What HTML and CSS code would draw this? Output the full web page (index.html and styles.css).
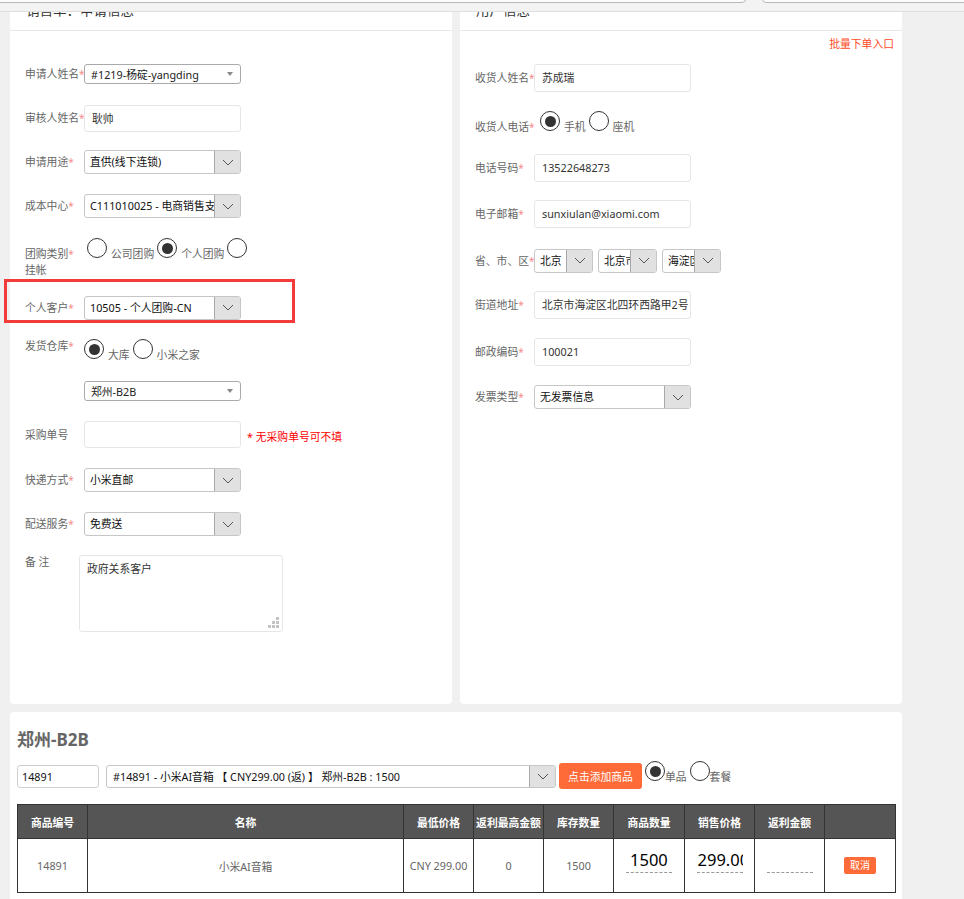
FILE: index.html
```html
<!DOCTYPE html>
<html lang="zh-CN">
<head>
<meta charset="utf-8">
<title>销售单</title>
<link rel="stylesheet" href="styles.css">
</head>
<body>
<div class="topbar">
  <div class="tb-box tb-a"></div>
  <div class="tb-box tb-b"></div>
</div>
<main class="page">
  <div class="cols">
    <section class="card">
      <header class="card-hd">销售单：申请信息</header>
      <div class="card-bd left-bd">
        <div class="row h44">
          <span class="lbl">申请人姓名<i>*</i></span>
          <div class="bsel"><span>#1219-杨碇-yangding</span><b class="caret"></b></div>
        </div>
        <div class="row h44">
          <span class="lbl">审核人姓名<i>*</i></span>
          <div class="inp">耿帅</div>
        </div>
        <div class="row h44">
          <span class="lbl">申请用途<i>*</i></span>
          <div class="sel"><span class="sel-txt">直供(线下连锁)</span><span class="sel-btn"><svg width="12" height="7" viewBox="0 0 12 7"><path d="M1 1l5 5 5-5" fill="none" stroke="#555" stroke-width="1"/></svg></span></div>
        </div>
        <div class="row h44">
          <span class="lbl">成本中心<i>*</i></span>
          <div class="sel"><span class="sel-txt">C111010025 - 电商销售支持部</span><span class="sel-btn"><svg width="12" height="7" viewBox="0 0 12 7"><path d="M1 1l5 5 5-5" fill="none" stroke="#555" stroke-width="1"/></svg></span></div>
        </div>
        <div class="row h51 top">
          <span class="lbl lbl-2">团购类别<i>*</i><br>挂帐</span>
          <div class="radios r-g1">
            <span class="radio"></span><span class="rtxt">公司团购</span>
            <span class="radio on"></span><span class="rtxt">个人团购</span>
            <span class="radio"></span>
          </div>
        </div>
        <div class="hl">
          <span class="lbl">个人客户<i>*</i></span>
          <div class="sel"><span class="sel-txt">10505 - 个人团购-CN</span><span class="sel-btn"><svg width="12" height="7" viewBox="0 0 12 7"><path d="M1 1l5 5 5-5" fill="none" stroke="#555" stroke-width="1"/></svg></span></div>
        </div>
        <div class="row h48 top r-pad16">
          <span class="lbl">发货仓库<i>*</i></span>
          <div class="radios">
            <span class="radio on"></span><span class="rtxt">大库</span>
            <span class="radio"></span><span class="rtxt">小米之家</span>
          </div>
        </div>
        <div class="row h40">
          <span class="lbl"></span>
          <div class="bsel"><span>郑州-B2B</span><b class="caret"></b></div>
        </div>
        <div class="row h47">
          <span class="lbl">采购单号</span>
          <div class="inp"></div>
          <span class="note">* 无采购单号可不填</span>
        </div>
        <div class="row h44">
          <span class="lbl">快递方式<i>*</i></span>
          <div class="sel"><span class="sel-txt">小米直邮</span><span class="sel-btn"><svg width="12" height="7" viewBox="0 0 12 7"><path d="M1 1l5 5 5-5" fill="none" stroke="#555" stroke-width="1"/></svg></span></div>
        </div>
        <div class="row h44">
          <span class="lbl">配送服务<i>*</i></span>
          <div class="sel"><span class="sel-txt">免费送</span><span class="sel-btn"><svg width="12" height="7" viewBox="0 0 12 7"><path d="M1 1l5 5 5-5" fill="none" stroke="#555" stroke-width="1"/></svg></span></div>
        </div>
        <div class="row top r-pad9">
          <span class="lbl lbl-note">备 注</span>
          <div class="txa">政府关系客户
            <svg class="grip" width="11" height="11" viewBox="0 0 11 11"><rect x="8" y="0" width="3" height="3"/><rect x="4" y="4" width="3" height="3"/><rect x="8" y="4" width="3" height="3"/><rect x="0" y="8" width="3" height="3"/><rect x="4" y="8" width="3" height="3"/><rect x="8" y="8" width="3" height="3"/></svg>
          </div>
        </div>
      </div>
    </section>

    <section class="card">
      <header class="card-hd">用户信息</header>
      <div class="card-bd right-bd">
        <div class="bulk">批量下单入口</div>
        <div class="row h46">
          <span class="lbl">收货人姓名<i>*</i></span>
          <div class="inp tall">苏成瑞</div>
        </div>
        <div class="row h44 top r-pad10">
          <span class="lbl lbl-r">收货人电话<i>*</i></span>
          <div class="radios r-g2">
            <span class="radio on"></span><span class="rtxt">手机</span>
            <span class="radio"></span><span class="rtxt">座机</span>
          </div>
        </div>
        <div class="row h46">
          <span class="lbl">电话号码<i>*</i></span>
          <div class="inp tall">13522648273</div>
        </div>
        <div class="row h46">
          <span class="lbl">电子邮箱<i>*</i></span>
          <div class="inp tall">sunxiulan@xiaomi.com</div>
        </div>
        <div class="row h47">
          <span class="lbl">省、市、区<i>*</i></span>
          <div class="addr">
            <div class="sel sm"><span class="sel-txt">北京</span><span class="sel-btn"><svg width="12" height="7" viewBox="0 0 12 7"><path d="M1 1l5 5 5-5" fill="none" stroke="#555" stroke-width="1"/></svg></span></div>
            <div class="sel sm"><span class="sel-txt">北京市</span><span class="sel-btn"><svg width="12" height="7" viewBox="0 0 12 7"><path d="M1 1l5 5 5-5" fill="none" stroke="#555" stroke-width="1"/></svg></span></div>
            <div class="sel sm"><span class="sel-txt">海淀区</span><span class="sel-btn"><svg width="12" height="7" viewBox="0 0 12 7"><path d="M1 1l5 5 5-5" fill="none" stroke="#555" stroke-width="1"/></svg></span></div>
          </div>
        </div>
        <div class="row h42">
          <span class="lbl">街道地址<i>*</i></span>
          <div class="inp tall">北京市海淀区北四环西路甲2号</div>
        </div>
        <div class="row h52">
          <span class="lbl">邮政编码<i>*</i></span>
          <div class="inp tall">100021</div>
        </div>
        <div class="row h38">
          <span class="lbl">发票类型<i>*</i></span>
          <div class="sel"><span class="sel-txt">无发票信息</span><span class="sel-btn"><svg width="12" height="7" viewBox="0 0 12 7"><path d="M1 1l5 5 5-5" fill="none" stroke="#555" stroke-width="1"/></svg></span></div>
        </div>
      </div>
    </section>
  </div>

  <section class="bcard">
    <h2 class="wh">郑州-B2B</h2>
    <div class="pbar">
      <div class="pinp">14891</div>
      <div class="sel wide"><span class="sel-txt">#14891 - 小米AI音箱 【 CNY299.00 (返) 】 郑州-B2B : 1500</span><span class="sel-btn"><svg width="12" height="7" viewBox="0 0 12 7"><path d="M1 1l5 5 5-5" fill="none" stroke="#555" stroke-width="1"/></svg></span></div>
      <button class="addbtn">点击添加商品</button>
      <div class="radios r-g3">
        <span class="radio on"></span><span class="rtxt">单品</span>
        <span class="radio"></span><span class="rtxt">套餐</span>
      </div>
    </div>
    <table class="tbl">
      <colgroup>
        <col class="w70"><col class="w316"><col class="w70"><col class="w70"><col class="w70"><col class="w71"><col class="w70"><col class="w70"><col class="w71">
      </colgroup>
      <thead>
        <tr><th>商品编号</th><th>名称</th><th>最低价格</th><th>返利最高金额</th><th>库存数量</th><th>商品数量</th><th>销售价格</th><th>返利金额</th><th></th></tr>
      </thead>
      <tbody>
        <tr>
          <td>14891</td>
          <td>小米AI音箱</td>
          <td>CNY 299.00</td>
          <td>0</td>
          <td>1500</td>
          <td class="incell"><div class="cin qty">1500</div></td>
          <td class="incell"><div class="cin price">299.00</div></td>
          <td class="incell"><div class="cin"></div></td>
          <td><span class="cancel">取消</span></td>
        </tr>
      </tbody>
    </table>
  </section>
</main>
</body>
</html>
```

FILE: styles.css
```css
* { box-sizing: border-box; margin: 0; padding: 0; }
html, body { background: #f0f0f0; }
body {
  font-family: "Noto Sans", "Noto Sans CJK SC", sans-serif;
  font-size: 10.8px;
  color: #333;
  overflow: hidden;
}

/* top overlay bar (page is scrolled under it) */
.topbar {
  position: fixed;
  top: 0; left: 0; right: 0;
  height: 12px;
  background: #f3f3f3;
  border-bottom: 1px solid #dedede;
  z-index: 10;
}
.tb-box {
  position: absolute;
  top: -3px;
  height: 6px;
  background: #fbfbfb;
  border: 1px solid #b9b9b9;
  border-radius: 0 0 4px 4px;
}
.tb-a { left: -6px; width: 752px; }
.tb-b { left: 762px; right: -10px; }

.page { margin-top: -10px; padding: 0 62px 0 10px; }
.cols { display: grid; grid-template-columns: 442px 442px; gap: 8px; }
.card { background: #fff; border-radius: 4px; min-height: 714px; }
.card-hd {
  height: 41px;
  border-bottom: 1px solid #e8e8e8;
  padding: 0 16px;
  font-size: 13.5px;
  line-height: 40px;
  color: #333;
}
.left-bd { padding: 21px 0 0 15px; }
.right-bd { padding: 0 8px 0 15px; }

.row { display: flex; align-items: center; }
.row.top { align-items: flex-start; }
.h38 { height: 38px; } .h40 { height: 40px; } .h42 { height: 42px; }
.h44 { height: 44px; } .h46 { height: 46px; } .h47 { height: 47px; }
.h48 { height: 48px; } .h51 { height: 51px; } .h52 { height: 52px; }
.r-pad16 { padding-top: 16px; }
.r-pad10 { padding-top: 10px; }
.r-pad9 { padding-top: 9px; }

.lbl {
  width: 59px;
  flex: none;
  color: #666;
  line-height: 14px;
  white-space: nowrap;
}
.lbl i { font-style: normal; color: #f78a8a; font-size: 10px; }
.lbl-2 { margin-top: 18px; line-height: 15px; }
.lbl-r { margin-top: 9px; }
.lbl-note { width: 54px; }

.inp {
  width: 157px;
  height: 27px;
  border: 1px solid #e6e6e6;
  border-radius: 3px;
  padding-left: 7px;
  line-height: 25px;
  color: #333;
  white-space: nowrap;
  overflow: hidden;
}
.inp.tall { height: 28px; line-height: 26px; }

.sel {
  width: 157px;
  height: 24px;
  border: 1px solid #c6c6c6;
  border-radius: 3px;
  display: flex;
  overflow: hidden;
  background: #fff;
}
.sel-txt {
  flex: 1;
  min-width: 0;
  padding-left: 5px;
  line-height: 22px;
  color: #111;
  overflow: hidden;
  white-space: nowrap;
}
.sel-btn {
  width: 26px;
  flex: none;
  background: #e1e1e1;
  border-left: 1px solid #a9a9a9;
  display: flex;
  align-items: center;
  justify-content: center;
}
.sel.sm { width: 59px; }
.addr { display: flex; gap: 5px; }

.bsel {
  width: 157px;
  height: 20px;
  border: 1px solid #aaa;
  border-radius: 3px;
  display: flex;
  align-items: center;
  justify-content: space-between;
  padding: 0 7px 0 6px;
  color: #222;
  white-space: nowrap;
}
.caret {
  width: 0; height: 0;
  border-top: 4px solid #888;
  border-left: 3px solid transparent;
  border-right: 3px solid transparent;
}

.radios { display: flex; align-items: flex-start; }
.r-g1 { margin-top: 10px; margin-left: 3px; }
.r-g2 { margin-left: 6px; }
.radio {
  width: 20px; height: 20px;
  border: 1.4px solid #333;
  border-radius: 50%;
  flex: none;
  display: flex;
  align-items: center;
  justify-content: center;
  background: #fff;
}
.radio.on::after {
  content: "";
  width: 11px; height: 11px;
  border-radius: 50%;
  background: #333;
}
.rtxt { margin: 9px 3px 0 4px; line-height: 14px; color: #666; white-space: nowrap; }

.hl {
  margin-left: -21px;
  width: 291px;
  height: 44px;
  border: 3px solid #f23b3b;
  display: flex;
  align-items: center;
  padding: 13px 0 0 18px;
}

.note { margin-left: 6px; color: #f00; margin-top: 3px; }

.txa {
  position: relative;
  width: 204px;
  height: 77px;
  border: 1px solid #e6e6e6;
  border-radius: 3px;
  padding: 6px 7px;
  line-height: 14px;
  color: #333;
}
.grip { position: absolute; right: 3px; bottom: 3px; fill: #c4c4c4; }

.bulk {
  height: 24px;
  padding-top: 5px;
  line-height: 16px;
  text-align: right;
  color: #ff4b1f;
}

/* bottom card */
.bcard {
  margin-top: 8px;
  background: #fff;
  border-radius: 4px;
  padding: 18px 7px 30px;
}
.wh { font-size: 17px; font-weight: bold; color: #666; line-height: 20px; }
.pbar { display: flex; align-items: center; height: 26px; margin-top: 13px; }
.pinp {
  width: 82px; height: 23px;
  border: 1px solid #cfcfcf;
  border-radius: 3px;
  padding-left: 4px;
  line-height: 21px;
  color: #111;
}
.sel.wide { width: 450px; height: 23px; margin-left: 7px; }
.sel.wide .sel-txt { padding-left: 6px; line-height: 21px; }
.addbtn {
  margin-left: 3px;
  width: 83px; height: 26px;
  border: none;
  border-radius: 3px;
  background: #fe6b38;
  color: #fff;
  font: inherit;
  font-size: 10.8px;
}
.r-g3 { align-self: flex-start; margin-top: -2px; margin-left: 3px; }
.r-g3 .rtxt { margin-left: 0; }

.tbl {
  margin-top: 15px;
  width: 878px;
  border-collapse: collapse;
  table-layout: fixed;
}
.w70 { width: 70px; } .w71 { width: 71px; } .w316 { width: 316px; }
.tbl th {
  background: #555;
  color: #fff;
  font-weight: bold;
  height: 34px;
  border: 1px solid #333;
  padding: 0;
  white-space: nowrap;
  overflow: hidden;
}
.tbl td {
  height: 54px;
  border: 1px solid #333;
  text-align: center;
  color: #666;
  padding: 0;
}
.tbl td.incell { padding-bottom: 10px; }
.cin {
  width: 46px;
  height: 24px;
  margin: 0 auto;
  border-bottom: 1px dashed #999;
  font-size: 16.5px;
  line-height: 22px;
  color: #000;
  text-align: left;
  white-space: nowrap;
  overflow: hidden;
}
.cin.qty { padding-left: 4px; }
.cin.price { padding-left: 1px; }
.cancel {
  display: inline-block;
  width: 32px; height: 17px;
  background: #fe6b38;
  color: #fff;
  border-radius: 2px;
  font-size: 10px;
  line-height: 17px;
}
```
